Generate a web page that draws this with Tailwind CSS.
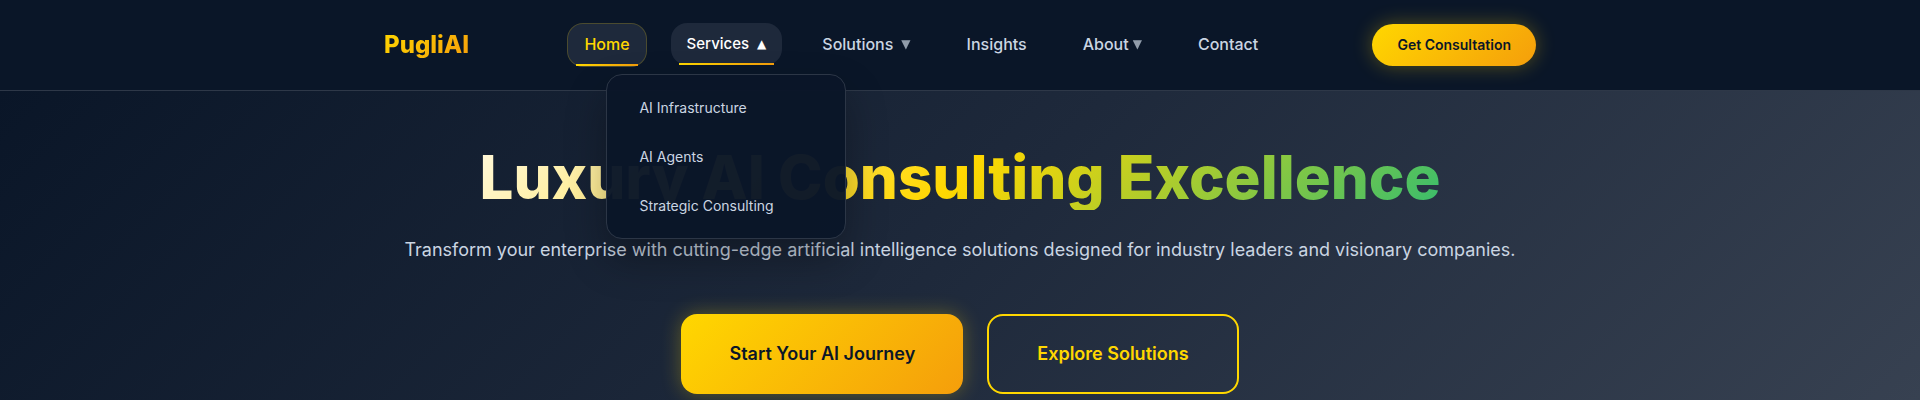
<!DOCTYPE html>
<html lang="en">
<head>
<meta charset="utf-8">
<meta name="viewport" content="width=device-width, initial-scale=1">
<title>PugliAI</title>
<script src="https://cdn.jsdelivr.net/npm/@tailwindcss/browser@4"></script>
</head>
<body class="flex min-h-screen flex-col bg-[#0a1628] font-['Inter',sans-serif] text-slate-300">
<header class="relative z-10 border-b border-[#2e3848] bg-[#0a1628]">
  <div class="mx-auto flex h-[90px] max-w-[1200px] items-center justify-between px-6">
    <a href="#" class="bg-linear-135/srgb from-[#ffd700] to-[#f59e0b] bg-clip-text text-2xl font-extrabold text-transparent">PugliAI</a>
    <nav aria-label="Main">
      <ul class="flex items-center gap-6 font-medium leading-6">
        <li><a href="#" class="relative block rounded-2xl border border-[#ffd700]/20 bg-[#1e293b] px-4 pt-2 pb-2.5 text-[#ffd700]">Home<span class="absolute bottom-0 left-2 right-2 h-0.5 bg-linear-to-r/srgb from-[#ffd700] to-[#f59e0b]"></span></a></li>
        <li class="relative">
          <button type="button" aria-expanded="true" class="relative -top-px flex items-center gap-2 rounded-2xl bg-[#1e293b] px-4 py-2 text-[15px] leading-[26px] text-white">Services <span class="font-['DejaVu_Sans'] text-xs">▲</span><span class="absolute bottom-0 left-2 right-2 h-0.5 bg-linear-to-r/srgb from-[#ffd700] to-[#f59e0b]"></span></button>
          <ul class="absolute left-1/2 top-[50px] w-60 -translate-x-1/2 rounded-2xl border border-[#2c3646] bg-[#0a1628]/97 p-2 text-sm font-normal shadow-[0_20px_40px_rgba(0,0,0,0.3)]">
            <li><a href="#" class="block px-6 py-3 leading-[25px]">AI Infrastructure</a></li>
            <li><a href="#" class="block px-6 py-3 leading-[25px]">AI Agents</a></li>
            <li><a href="#" class="block px-6 py-3 leading-[25px]">Strategic Consulting</a></li>
          </ul>
        </li>
        <li><button type="button" class="flex items-center gap-2 px-4 pt-2 pb-2.5">Solutions <span class="font-['DejaVu_Sans'] text-xs leading-6 opacity-70">▼</span></button></li>
        <li><a href="#" class="block px-4 pt-2 pb-2.5">Insights</a></li>
        <li><button type="button" class="flex items-center gap-1 px-4 pt-2 pb-2.5">About <span class="font-['DejaVu_Sans'] text-xs leading-6 opacity-70">▼</span></button></li>
        <li><a href="#" class="block px-4 pt-2 pb-2.5">Contact</a></li>
      </ul>
    </nav>
    <a href="#" class="rounded-full bg-linear-135/srgb from-[#ffd700] to-[#f59e0b] px-[25px] py-2 text-sm font-semibold leading-[26px] text-[#0a1628] shadow-[0_0_20px_rgba(255,215,0,0.3)]">Get Consultation</a>
  </div>
</header>
<main class="grow bg-linear-135/srgb from-[#0a1628] via-[#1e293b] to-[#374151] px-6 pt-[53px] pb-1.5 text-center">
  <h1 class="mx-auto w-fit bg-linear-135/srgb from-[#fff8dc] via-[#ffd700] to-[#38bd6d] bg-clip-text text-6xl font-extrabold leading-[66px] text-transparent">Luxury AI Consulting Excellence</h1>
  <p class="mt-6 text-lg leading-8">Transform your enterprise with cutting-edge artificial intelligence solutions designed for industry leaders and visionary companies.</p>
  <div class="mt-12 flex justify-center gap-6 text-lg font-semibold">
    <a href="#" class="rounded-2xl bg-linear-135/srgb from-[#ffd700] to-[#f59e0b] px-12 py-6 leading-8 text-[#0a1628] shadow-[0_0_20px_rgba(255,215,0,0.3)]">Start Your AI Journey</a>
    <a href="#" class="rounded-2xl border-2 border-[#ffd700] px-12 py-6 leading-7 text-[#ffd700]">Explore Solutions</a>
  </div>
</main>
</body>
</html>
